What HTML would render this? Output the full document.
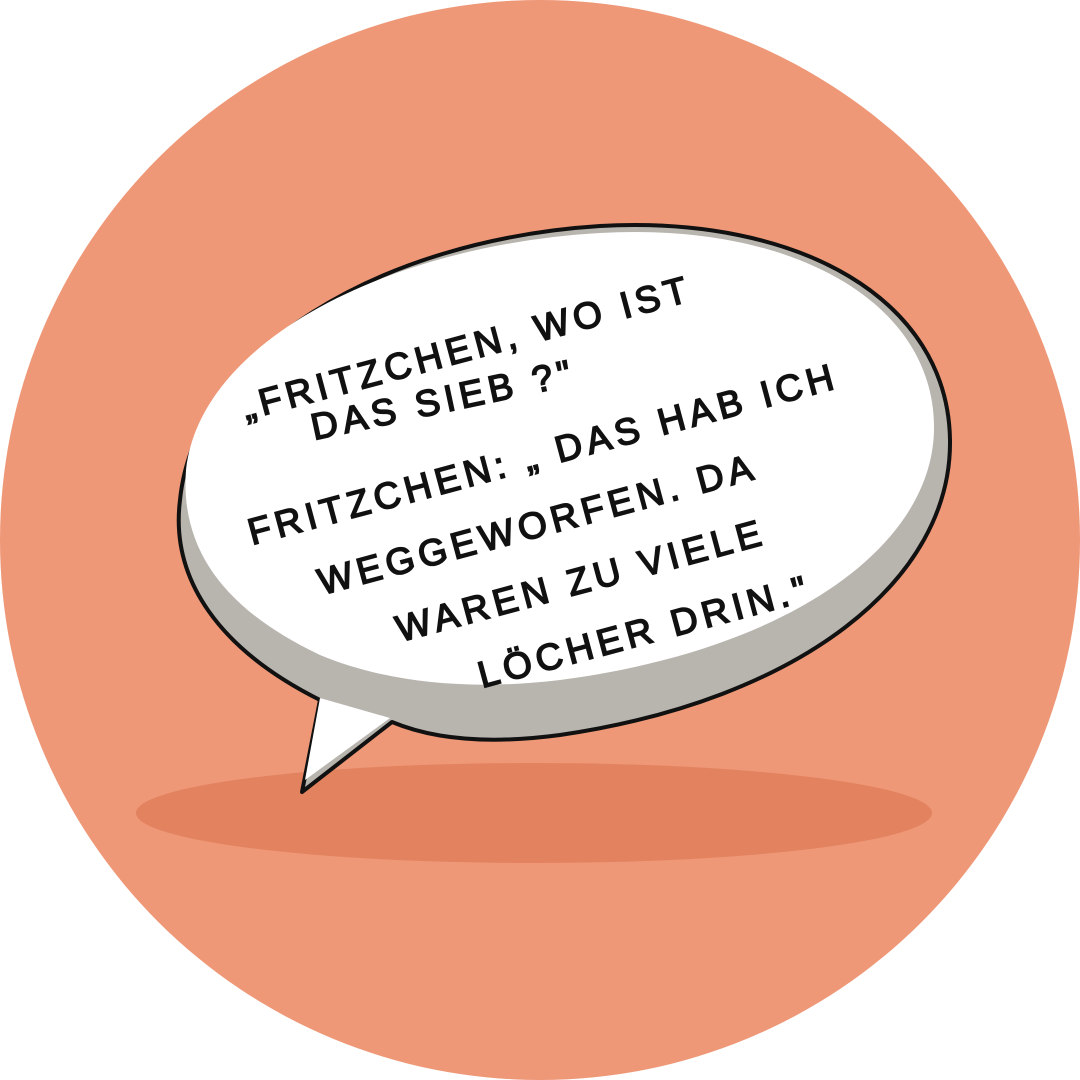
<!DOCTYPE html>
<html><head><meta charset="utf-8"><style>
html,body{margin:0;padding:0;background:#fff;width:1080px;height:1080px;overflow:hidden}
</style></head><body>
<svg width="1080" height="1080" viewBox="0 0 1080 1080" xmlns="http://www.w3.org/2000/svg">
<circle cx="540" cy="540" r="540" fill="#EE9877"/>
<ellipse cx="534" cy="813" rx="398" ry="50" fill="#E3825F"/>
<path d="M320 700 C220 650 170 580 180 500 C195 350 380 240 600 226 C800 215 948 300 950 440 C952 580 800 700 560 735 C500 743 440 742 392 722 L302 792 Z" fill="#B8B4AE" stroke="#111" stroke-width="4" stroke-linejoin="round"/>
<path d="M186 470 C200 340 390 245 600 233 C790 222 932 300 934 425 C936 545 790 650 560 680 C460 692 380 680 320 655 C225 610 180 550 186 470 Z" fill="#FFFFFF"/>
<path d="M320 698 L305 780 L390 718 Z" fill="#fff"/>
<g font-family="'Liberation Sans',sans-serif" font-size="37" fill="#111" stroke="#111" stroke-width="1.6" letter-spacing="5">
<text transform="translate(246 420) rotate(-15)">„FRITZCHEN, WO IST</text>
<text transform="translate(314 440) rotate(-12)">DAS SIEB ?"</text>
<text transform="translate(252 545) rotate(-15)">FRITZCHEN: „ DAS HAB ICH</text>
<text transform="translate(322 595) rotate(-15)">WEGGEWORFEN. DA</text>
<text transform="translate(400 642) rotate(-15)">WAREN ZU VIELE</text>
<text transform="translate(482 688) rotate(-15)">LÖCHER DRIN."</text>
</g>
</svg>
</body></html>
